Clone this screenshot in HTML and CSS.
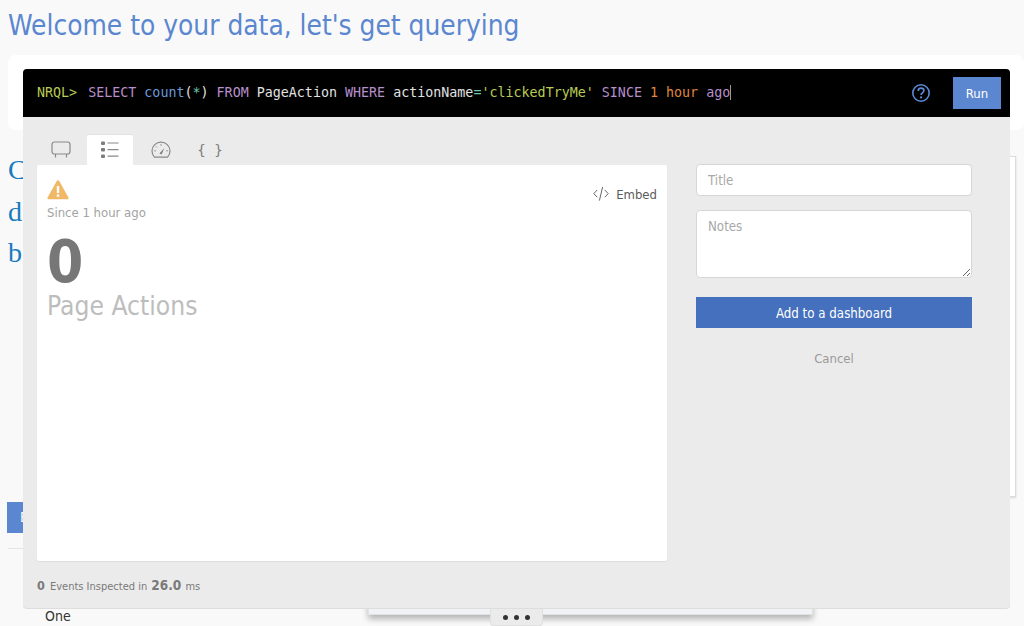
FILE: index.html
```html
<!DOCTYPE html>
<html lang="en">
<head>
<meta charset="utf-8">
<title>Welcome to your data</title>
<link rel="stylesheet" href="styles.css">
</head>
<body>
<div class="page">
  <h1 class="welcome">Welcome to your data, let's get querying</h1>
  <div class="query-card"></div>
  <div class="copy">
    <p>C</p>
    <p>d</p>
    <p>b</p>
  </div>
  <div class="page-btn">E</div>
  <div class="rule"></div>
  <div class="one">One</div>
</div>
<div class="side-panel"></div>
<div class="drawer-strip"></div>
<div class="more-tab"><i></i><i></i><i></i></div>

<section class="modal">
  <header class="nrql">
    <div class="nrql-line"><span class="prompt">NRQL&gt;</span> <span class="kw">SELECT</span> <span class="fn">count</span>(<span class="star">*</span>) <span class="kw">FROM</span> PageAction <span class="kw">WHERE</span> actionName<span class="star">=</span><span class="str">'clickedTryMe'</span> <span class="kw">SINCE</span> <span class="num">1 hour</span> <span class="kw">ago</span><span class="caret"></span></div>
    <svg class="help" width="20" height="20" viewBox="0 0 20 20"><circle cx="10" cy="10" r="8.2" fill="none" stroke="#5b8ad6" stroke-width="1.6"/><path d="M7.2 7.9c0-1.7 1.3-2.7 2.9-2.7s2.8 1 2.8 2.4c0 2.2-2.8 2.2-2.8 4.3" fill="none" stroke="#5b8ad6" stroke-width="1.7"/><circle cx="10.1" cy="14.4" r="1.1" fill="#5b8ad6"/></svg>
    <button class="run">Run</button>
  </header>
  <div class="modal-body">
    <div class="result-col">
      <nav class="tabs">
        <span class="tab">
          <svg width="20" height="18" viewBox="0 0 20 18"><rect x="1" y="1" width="18" height="12" rx="2.5" fill="none" stroke="#8a8a8a" stroke-width="1.2"/><path d="M4.5 13v3.5M15.5 13v3.5" stroke="#8a8a8a" stroke-width="1.2"/></svg>
        </span>
        <span class="tab active">
          <svg width="18" height="18" viewBox="0 0 18 18"><g fill="#7d7d7d"><rect x="0" y="0.5" width="4" height="3.4" rx="1"/><rect x="0" y="7" width="4" height="3.4" rx="1"/><rect x="0" y="13.5" width="4" height="3.4" rx="1"/></g><path d="M6.5 2h11M6.5 8.7h11M6.5 15.2h11" stroke="#8a8a8a" stroke-width="1.2"/></svg>
        </span>
        <span class="tab tab-gauge">
          <svg width="20" height="18" viewBox="0 0 20 18"><path d="M3.4 16.2A9 9 0 1 1 16.6 16.2Z" fill="none" stroke="#8a8a8a" stroke-width="1.2"/><path d="M8.4 12.4l5-5.4-2.8 6.4z" fill="#7d7d7d"/><path d="M3.2 9.8h1.6M5 5.4l1 1M10 3.2v1.6M15.2 9.8h1.6" stroke="#8a8a8a" stroke-width="1"/></svg>
        </span>
        <span class="tab tab-json">{&#8201;}</span>
      </nav>
      <div class="result">
        <div class="result-top">
          <div>
            <svg class="warn" width="22" height="20" viewBox="0 0 22 20"><path d="M9.6 1.2a1.6 1.6 0 0 1 2.8 0l9 16.4a1 1 0 0 1-.9 1.6H1.5a1 1 0 0 1-.9-1.6z" fill="#f0b867"/><rect x="9.8" y="6" width="2.4" height="7" fill="#fff"/><rect x="9.8" y="14.4" width="2.4" height="2.4" fill="#fff"/></svg>
            <div class="since">Since 1 hour ago</div>
          </div>
          <div class="embed">
            <svg width="16" height="16" viewBox="0 0 16 16"><path d="M4.2 4 .8 7.6l3.4 3.6M11.8 4l3.4 3.6-3.4 3.6M9.6 1 6.4 14.6" fill="none" stroke="#666" stroke-width="1"/></svg>
            <span>Embed</span>
          </div>
        </div>
        <div class="big">0</div>
        <div class="big-label">Page Actions</div>
      </div>
      <footer class="inspected"><b class="count">0</b> Events Inspected in <b class="ms">26.0</b> ms</footer>
    </div>
    <form class="side-form">
      <input class="field" type="text" placeholder="Title">
      <textarea class="field notes" placeholder="Notes"></textarea>
      <button class="add" type="button">Add to a dashboard</button>
      <div class="cancel">Cancel</div>
    </form>
  </div>
</section>
</body>
</html>
```
FILE: styles.css
```css
* { box-sizing: border-box; }
html, body { margin: 0; height: 626px; overflow: hidden; }
body {
  background: #f9f9f9;
  font-family: "DejaVu Sans Condensed", "DejaVu Sans", sans-serif;
  position: relative;
}
.page { padding: 8px 0 0 8px; }
.welcome {
  margin: 0;
  font-size: 27.8px;
  line-height: 36px;
  font-weight: 400;
  color: #5b87d0;
}
.query-card {
  margin-top: 11px;
  height: 75px;
  background: #fff;
  border-radius: 8px;
}
.copy {
  margin-top: 19px;
  font-family: "Liberation Serif", serif;
  font-size: 28px;
  line-height: 41.5px;
  color: #1a7ac0;
}
.copy p { margin: 0; }
.page-btn {
  margin: 228px 0 0 -1px;
  width: 40px;
  height: 31px;
  background: #5b87d0;
  color: #fff;
  font-size: 14px;
  line-height: 31px;
  padding-left: 13px;
}
.rule { margin-top: 15px; height: 1px; background: #e4e4e4; width: 30px; }
.one {
  margin: 58px 0 0 37px;
  font-size: 14px;
  line-height: 18px;
  color: #333;
}
.side-panel {
  position: absolute;
  left: 1000px; top: 156px;
  width: 16px; height: 341px;
  background: #fff;
  border: 1px solid #dcdcdc;
  box-shadow: 0 1px 2px rgba(0, 0, 0, .15);
}
.drawer-strip {
  position: absolute;
  left: 368px; top: 600px;
  width: 445px; height: 15px;
  background: #f1f2f5;
  border: 1px solid #e2e2e2;
  box-shadow: 0 4px 6px rgba(0, 0, 0, .28);
}
.more-tab {
  position: absolute;
  left: 490px; top: 600px;
  width: 53px; height: 26px;
  padding-top: 14px;
  background: #ebebeb;
  border: 1px solid #e0e0e0;
  border-radius: 0 0 3px 3px;
  display: flex;
  justify-content: center;
  gap: 6px;
  z-index: 1;
}
.more-tab i { width: 5px; height: 5px; border-radius: 50%; background: #333; }
.modal {
  position: absolute;
  left: 23px; top: 69px;
  width: 987px; height: 539px;
  background: #ebebeb;
  border-radius: 4px;
  box-shadow: 0 1px 0 #ddd;
  z-index: 2;
}
.nrql {
  height: 48px;
  background: #000;
  border-radius: 4px 4px 0 0;
  display: flex;
  align-items: center;
  padding: 0 9px 0 14px;
  color: #e2e2e2;
}
.nrql-line {
  flex: 1;
  font-family: "DejaVu Sans Mono", monospace;
  font-size: 13.33px;
  white-space: pre;
  margin-top: -2px;
}
.prompt { color: #b8cc54; margin-right: 3px; }
.kw { color: #b78fcc; }
.fn { color: #6a9bd8; }
.star { color: #6fc7b0; }
.str { color: #b8cc54; }
.num { color: #e0873f; }
.caret { display: inline-block; width: 1px; height: 15px; background: #999; vertical-align: -3px; }
.help { margin-right: 22px; }
.run {
  width: 48px; height: 32px;
  border: 0;
  background: #5b87d0;
  color: #fff;
  font: 13px "DejaVu Sans Condensed", "DejaVu Sans", sans-serif;
  padding: 0;
}
.modal-body {
  display: flex;
  padding: 0 38px 0 14px;
  gap: 29px;
}
.result-col { width: 630px; }
.tabs {
  display: flex;
  height: 30px;
  margin-top: 18px;
  padding-left: 1px;
  gap: 3px;
}
.tab {
  width: 46px;
  display: flex;
  justify-content: center;
  padding-top: 6px;
  color: #7d7d7d;
}
.tab.active { background: #fff; border-radius: 2px 2px 0 0; box-shadow: 0 -1px 0 #e2e2e2; }
.tab-gauge { padding-left: 4px; }
.tab-json { padding-left: 4px; font: 400 14px/18px "DejaVu Sans Mono", monospace; }
.result {
  height: 396px;
  background: #fff;
  border-radius: 2px;
  box-shadow: 0 1px 1px #ddd;
  padding: 15px 10px 0 10px;
}
.result-top { display: flex; justify-content: space-between; }
.warn { display: block; }
.since { margin-top: 5px; font-size: 13px; line-height: 16px; color: #a3a3a3; }
.embed {
  display: flex;
  align-items: center;
  gap: 7px;
  height: 20px;
  margin-top: 4px;
  font-size: 13px;
  color: #5a5a5a;
}
.big {
  margin-top: 12px;
  font-size: 58px;
  line-height: 58px;
  font-weight: 700;
  color: #777;
}
.big-label { font-size: 26.2px; line-height: 30px; color: #bdbdbd; }
.inspected { margin-top: 16px; font-size: 11px; line-height: 16px; color: #7a7a7a; }
.inspected b { font-size: 12.5px; }
.inspected .count { margin-right: 2px; }
.inspected .ms { font-size: 13.5px; margin: 0 1px; }
.side-form { width: 276px; padding-top: 47px; display: flex; flex-direction: column; }
.field {
  width: 100%;
  height: 32px;
  border: 1px solid #d6d6d6;
  border-radius: 4px;
  background: #fff;
  padding: 0 11px;
  font: 13.2px "DejaVu Sans Condensed", "DejaVu Sans", sans-serif;
  display: block;
}
.field::placeholder { color: #a8a8a8; opacity: 1; }
.notes { height: 68px; margin-top: 14px; padding-top: 8px; }
.add {
  margin-top: 19px;
  height: 31px;
  border: 0;
  padding-top: 2px;
  background: #4470bd;
  color: #fff;
  font: 13.2px "DejaVu Sans Condensed", "DejaVu Sans", sans-serif;
}
.cancel { margin-top: 22px; text-align: center; font-size: 13px; line-height: 18px; color: #9a9a9a; }
```
